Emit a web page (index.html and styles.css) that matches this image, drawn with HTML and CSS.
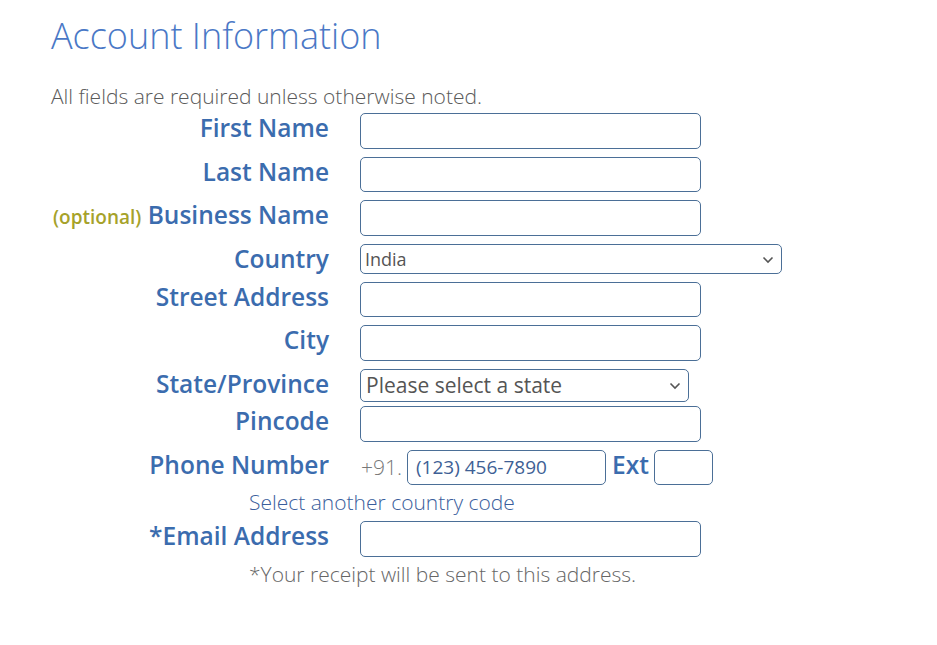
FILE: index.html
```html
<!DOCTYPE html>
<html>
<head>
  <meta charset="utf-8">
  <link rel="stylesheet" href="styles.css">
</head>
<body>
  <div class="account">
    <h1 class="title">Account Information</h1>
    <p class="intro">All fields are required unless otherwise noted.</p>

    <div class="form">
      <div class="row">
        <label class="label">First Name</label>
        <div class="field"><input class="text-input" type="text"></div>
      </div>
      <div class="row">
        <label class="label">Last Name</label>
        <div class="field"><input class="text-input" type="text"></div>
      </div>
      <div class="row">
        <label class="label"><span class="optional">(optional)</span> Business Name</label>
        <div class="field"><input class="text-input" type="text"></div>
      </div>
      <div class="row">
        <label class="label">Country</label>
        <div class="field">
          <div class="select-wrap country">
            <select class="select">
              <option>India</option>
            </select>
            <svg class="chevron" width="12" height="8" viewBox="0 0 12 8"><path d="M1.5 1.5 L6 6 L10.5 1.5" fill="none" stroke="#555" stroke-width="1.6"/></svg>
          </div>
        </div>
      </div>
      <div class="row">
        <label class="label">Street Address</label>
        <div class="field"><input class="text-input" type="text"></div>
      </div>
      <div class="row">
        <label class="label">City</label>
        <div class="field"><input class="text-input" type="text"></div>
      </div>
      <div class="row row-tight">
        <label class="label">State/Province</label>
        <div class="field">
          <div class="select-wrap state">
            <select class="select">
              <option>Please select a state</option>
            </select>
            <svg class="chevron" width="12" height="8" viewBox="0 0 12 8"><path d="M1.5 1.5 L6 6 L10.5 1.5" fill="none" stroke="#555" stroke-width="1.6"/></svg>
          </div>
        </div>
      </div>
      <div class="row">
        <label class="label">Pincode</label>
        <div class="field"><input class="text-input" type="text"></div>
      </div>
      <div class="row row-phone">
        <label class="label">Phone Number</label>
        <div class="field phone">
          <span class="dial-code">+91.</span>
          <input class="text-input phone-input" type="text" placeholder="(123) 456-7890">
          <span class="ext-label">Ext</span>
          <input class="text-input ext-input" type="text">
        </div>
      </div>
      <div class="note-row">
        <a class="country-link">Select another country code</a>
      </div>
      <div class="row row-email">
        <label class="label">*Email Address</label>
        <div class="field"><input class="text-input" type="text"></div>
      </div>
      <div class="note-row">
        <span class="receipt-note">*Your receipt will be sent to this address.</span>
      </div>
    </div>
  </div>
</body>
</html>
```

FILE: styles.css
```css
body {
  margin: 0;
  font-family: 'Open Sans', 'DejaVu Sans', sans-serif;
  background: #ffffff;
  color: #555555;
}

.account {
  padding: 11px 0 0 51px;
}

.title {
  margin: 0;
  font-size: 36px;
  font-weight: 300;
  line-height: 49px;
  color: #4a78c6;
}

.intro {
  margin: 22px 0 0 0;
  font-size: 21px;
  font-weight: 300;
  line-height: 28px;
  color: #5a5a5a;
}

.form {
  display: flex;
  flex-direction: column;
  gap: 8px;
  margin-top: 3px;
}

.row {
  display: grid;
  grid-template-columns: 278px auto;
  column-gap: 31px;
  align-items: start;
}

.row-tight {
  margin-bottom: -3.5px;
}

.row-phone {
  margin-bottom: -5px;
}

.row-email {
  margin-top: -3px;
  margin-bottom: -4.5px;
}

.label {
  font-size: 24.5px;
  font-weight: 600;
  line-height: 30px;
  text-align: right;
  color: #3b6cae;
  white-space: nowrap;
}

.optional {
  font-size: 19px;
  color: #a6a22a;
}

.field {
  display: flex;
  align-items: center;
}

.text-input {
  box-sizing: border-box;
  width: 341px;
  height: 35.5px;
  margin: 0;
  padding: 0 8px;
  border: 1px solid #4b6f97;
  border-radius: 5px;
  background: #ffffff;
  font-family: inherit;
  font-size: 19px;
  color: #3e5f95;
  outline: none;
}

.text-input::placeholder {
  color: #3e5f95;
  opacity: 1;
}

.select-wrap {
  position: relative;
}

.select {
  box-sizing: border-box;
  display: block;
  margin: 0;
  border: 1px solid #4b6f97;
  border-radius: 5px;
  background: #ffffff;
  font-family: inherit;
  color: #555555;
  appearance: none;
  -webkit-appearance: none;
  outline: none;
}

.country .select {
  width: 422px;
  height: 30px;
  padding: 0 4px;
  font-size: 18px;
}

.state .select {
  width: 329px;
  height: 33px;
  padding: 0 5px;
  font-size: 21px;
}

.chevron {
  position: absolute;
  right: 8px;
  top: 50%;
  margin-top: -3px;
  pointer-events: none;
}

.dial-code {
  width: 46px;
  padding-left: 1px;
  font-size: 21px;
  font-weight: 300;
  color: #777777;
}

.phone-input {
  width: 199px;
}

.ext-label {
  margin: 0 5px 0 6px;
  font-size: 24.5px;
  font-weight: 600;
  line-height: 30px;
  color: #3b6cae;
  align-self: flex-start;
}

.ext-input {
  width: 59px;
}

.note-row {
  padding-left: 198px;
  font-size: 21px;
  font-weight: 300;
  line-height: 28px;
}

.country-link {
  color: #3a5e9c;
}

.receipt-note {
  color: #666666;
}
```
